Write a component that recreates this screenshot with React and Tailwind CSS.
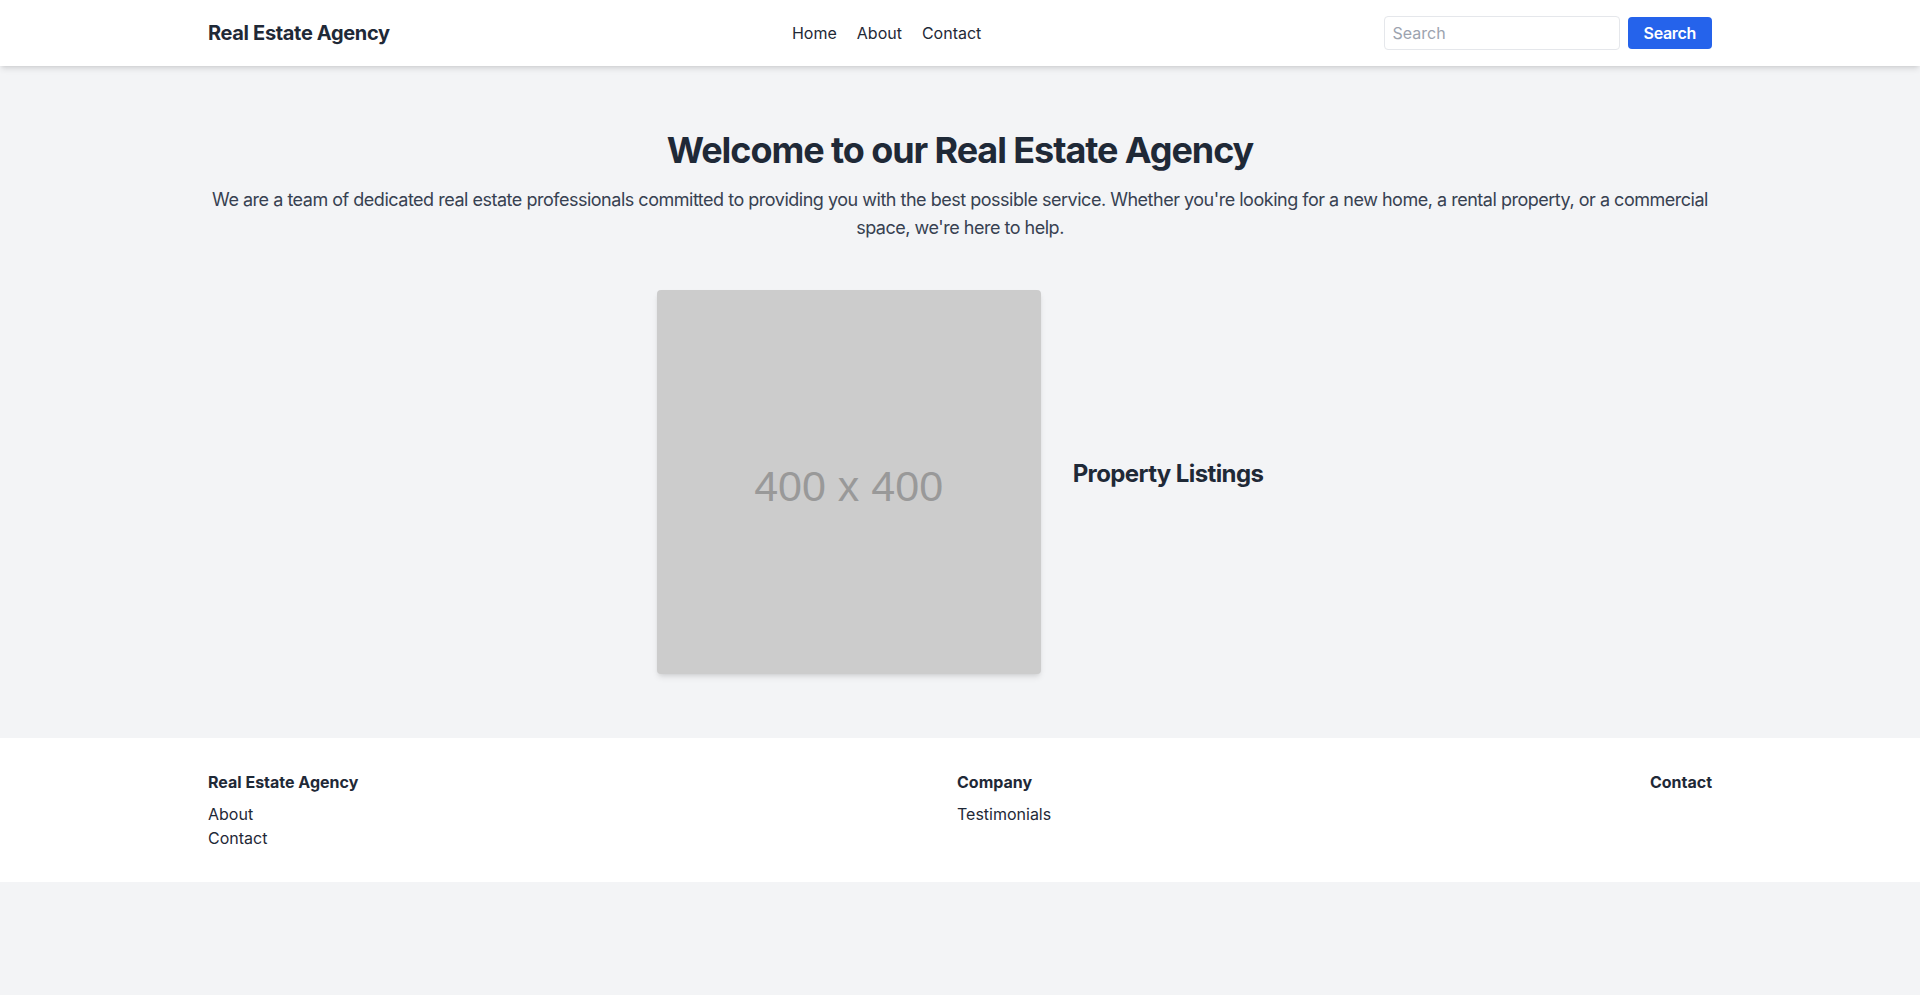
export default function App() {
  return (
    <div className="min-h-screen bg-[#f3f4f6] text-[#1f2937]" style={{ fontFamily: "Inter, 'Noto Sans', sans-serif" }}>
      <header className="bg-white shadow-md">
        <div className="container mx-auto px-4 py-4 flex items-center justify-between">
          <a href="#" className="text-xl font-bold text-[#1f2937] tracking-[-0.017em]">Real Estate Agency</a>
          <nav className="flex items-center gap-5 text-base text-[#1f2937]">
            <a href="#">Home</a>
            <a href="#">About</a>
            <a href="#">Contact</a>
          </nav>
          <div className="flex items-center gap-2">
            <input
              type="text"
              placeholder="Search"
              className="w-[236px] border border-[#e5e7eb] rounded px-2 py-1 text-base text-[#1f2937] placeholder-[#9ca3af] outline-none"
            />
            <button className="bg-[#2563eb] text-white font-semibold rounded px-4 py-1 text-base tracking-[-0.02em]">Search</button>
          </div>
        </div>
      </header>

      <main className="container mx-auto px-4 py-16">
        <h1 className="text-4xl font-bold text-center text-[#1f2937] mb-4 tracking-[-0.03em]">Welcome to our Real Estate Agency</h1>
        <p className="text-lg text-center text-[#374151] tracking-[-0.027em]">
          We are a team of dedicated real estate professionals committed to providing you with the best possible service. Whether you're looking for a new home, a rental property, or a commercial space, we're here to help.
        </p>
        <div className="mt-12 flex justify-center items-center">
          <div className="w-96 h-96 bg-[#cccccc] rounded shadow-md flex items-center justify-center pt-2">
            <span className="text-[43px] text-[#999999]" style={{ fontFamily: "'Liberation Sans', Arial, sans-serif" }}>400 x 400</span>
          </div>
          <div className="ml-8">
            <h2 className="text-2xl font-bold text-[#1f2937] mb-4 tracking-[-0.025em]">Property Listings</h2>
          </div>
        </div>
      </main>

      <footer className="bg-white">
        <div className="container mx-auto px-4 py-8 flex justify-between text-[#1f2937]">
          <div>
            <h3 className="font-bold mb-2">Real Estate Agency</h3>
            <ul>
              <li><a href="#">About</a></li>
              <li><a href="#">Contact</a></li>
            </ul>
          </div>
          <div>
            <h3 className="font-bold mb-2">Company</h3>
            <ul>
              <li><a href="#">Testimonials</a></li>
            </ul>
          </div>
          <div>
            <h3 className="font-bold mb-2">Contact</h3>
          </div>
        </div>
      </footer>
    </div>
  );
}
